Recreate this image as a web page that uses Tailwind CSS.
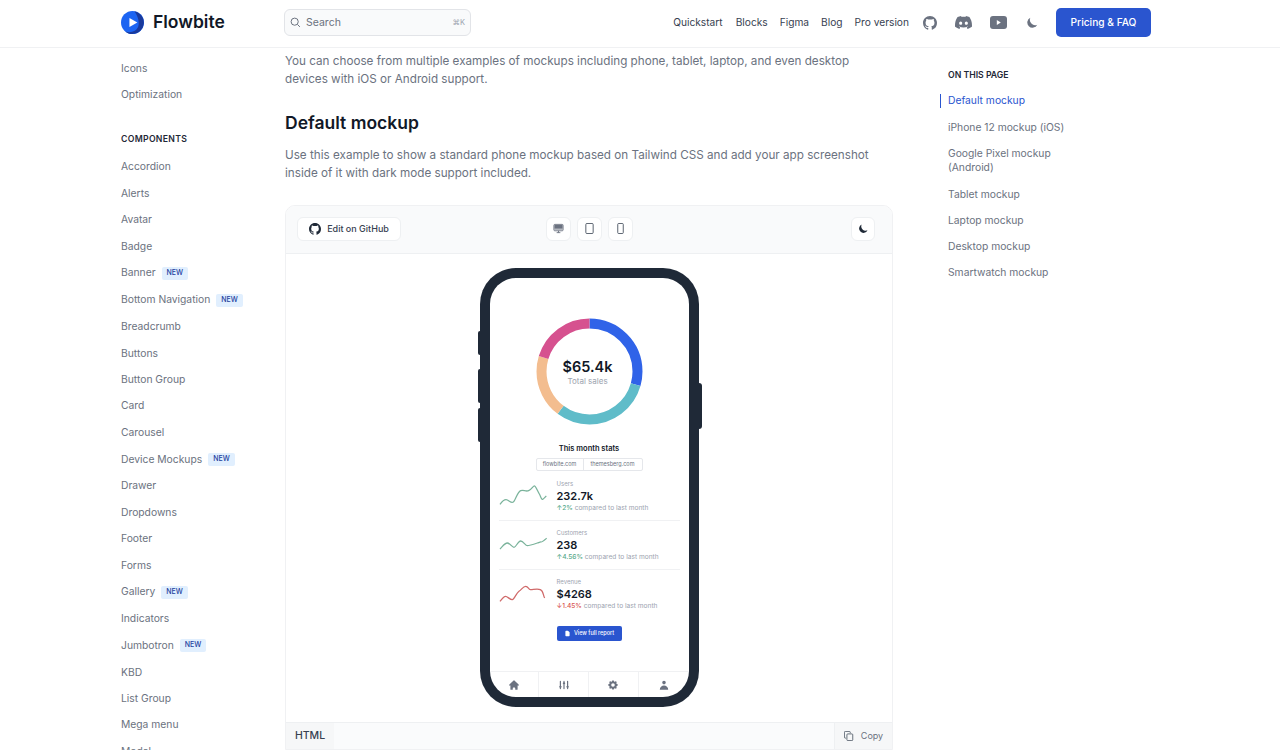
<!DOCTYPE html>
<html lang="en">
<head>
    <meta charset="UTF-8">
    <title>Flowbite | Device Mockups</title>
    <script src="https://cdn.jsdelivr.net/npm/@tailwindcss/browser@4"></script>
</head>
<body class="bg-white font-['Inter',sans-serif] h-[750px] overflow-hidden">

    <!-- Header -->
    <header class="h-[48px] border-b border-[#f0f1f3] flex items-center pb-[2px] pl-[121px] pr-[129px]">
        <a class="flex items-center w-[163px]">
            <svg class="w-[23px] h-[23px]" viewBox="0 0 24 24">
                <circle cx="12" cy="12" r="12" fill="#1c64f2"/>
                <path d="M14 .2A12 12 0 0 1 12 24c-3 0-5.500-1-7.500-2.700 5 2 11.500 .5 13.500-5 1.500-5-.5-11.500-4-16.100z" fill="#1a3a9c"/>
                <path d="M8.800 7.300 17 12l-8.200 4.700z" fill="#fff"/>
            </svg>
            <span class="ml-[9px] text-[17.500px] font-semibold text-[#111827]">Flowbite</span>
        </a>
        <div class="w-[187px] h-[27px] rounded-[6px] border border-[#e2e4e8] bg-[#f9fafb] flex items-center px-[5px] text-[#6b7280]">
            <svg class="w-[11px] h-[11px]" viewBox="0 0 20 20" fill="none" stroke="#6b7280" stroke-width="1.800"><circle cx="8.500" cy="8.500" r="6.500"/><path d="M13.500 13.500 18 18"/></svg>
            <span class="ml-[5px] text-[10.500px]">Search</span>
            <span class="ml-auto text-[7.500px] text-[#9ca3af]">⌘K</span>
        </div>
        <nav class="ml-auto flex items-center text-[10.200px] text-[#374151]">
            <a class="mr-[13px]">Quickstart</a>
            <a class="mr-[12px]">Blocks</a>
            <a class="mr-[12px]">Figma</a>
            <a class="mr-[12px]">Blog</a>
            <a class="mr-[14px]">Pro version</a>
            <svg class="w-[14px] h-[14px] mr-[18px]" viewBox="0 0 16 16" fill="#6b7280"><path d="M8 0C3.580 0 0 3.580 0 8c0 3.540 2.290 6.530 5.470 7.590.4.070.55-.17.55-.38 0-.19-.01-.82-.01-1.490-2.010.37-2.530-.49-2.690-.94-.09-.23-.48-.94-.82-1.130-.28-.15-.68-.52-.01-.53.63-.01 1.080.58 1.230.82.72 1.210 1.870.87 2.330.66.070-.52.28-.87.51-1.070-1.780-.2-3.640-.89-3.640-3.950 0-.87.31-1.590.82-2.150-.08-.2-.36-1.020.08-2.120 0 0 .67-.21 2.200.82.64-.18 1.320-.27 2-.27.68 0 1.360.09 2 .27 1.530-1.040 2.200-.82 2.200-.82.44 1.100.16 1.920.08 2.120.51.56.82 1.270.82 2.150 0 3.070-1.870 3.750-3.650 3.950.29.25.54.73.54 1.480 0 1.070-.01 1.930-.01 2.200 0 .21.15.46.55.38A8.013 8.013 0 0 0 16 8c0-4.420-3.580-8-8-8z"/></svg>
            <svg class="w-[17px] h-[17px] mr-[18px]" viewBox="0 0 24 24" fill="#6b7280"><path d="M20.317 4.370a19.790 19.790 0 0 0-4.885-1.515.074.074 0 0 0-.079.037c-.211.375-.445.865-.608 1.250-1.845-.276-3.680-.276-5.487 0-.164-.393-.406-.874-.618-1.250a.077.077 0 0 0-.079-.037 19.740 19.740 0 0 0-4.885 1.515.070.070 0 0 0-.032.028C.533 9.046-.319 13.580.099 18.058a.082.082 0 0 0 .031.056c2.053 1.508 4.041 2.423 5.993 3.029a.078.078 0 0 0 .084-.028c.462-.630.873-1.295 1.226-1.994a.076.076 0 0 0-.042-.106c-.653-.248-1.274-.549-1.872-.892a.077.077 0 0 1-.008-.128c.126-.094.252-.192.372-.291a.074.074 0 0 1 .078-.011c3.928 1.793 8.180 1.793 12.061 0a.074.074 0 0 1 .079.010c.120.099.246.198.373.292a.077.077 0 0 1-.007.128c-.598.349-1.219.645-1.873.891a.077.077 0 0 0-.041.107c.360.698.772 1.363 1.225 1.993a.076.076 0 0 0 .084.029c1.961-.607 3.950-1.522 6.002-3.029a.077.077 0 0 0 .031-.055c.500-5.177-.838-9.674-3.548-13.660a.061.061 0 0 0-.031-.029zM8.020 15.331c-1.183 0-2.157-1.086-2.157-2.419 0-1.333.956-2.419 2.157-2.419 1.211 0 2.176 1.095 2.157 2.419 0 1.333-.956 2.419-2.157 2.419zm7.975 0c-1.183 0-2.157-1.086-2.157-2.419 0-1.333.955-2.419 2.157-2.419 1.211 0 2.176 1.095 2.157 2.419 0 1.333-.946 2.419-2.157 2.419z"/></svg>
            <svg class="w-[17px] h-[13px] mr-[19px]" viewBox="0 0 17 13"><rect width="17" height="13" rx="3" fill="#6b7280"/><path d="M6.800 4v5l4-2.500z" fill="#fff"/></svg>
            <svg class="w-[13px] h-[13px] mr-[17px]" viewBox="0 0 20 20" fill="#6b7280"><path d="M17.293 13.293A8 8 0 0 1 6.707 2.707a8.001 8.001 0 1 0 10.586 10.586z"/></svg>
            <a class="w-[95px] h-[29px] rounded-[5px] bg-[#2a55cf] text-white font-medium text-[10.200px] flex items-center justify-center">Pricing &amp; FAQ</a>
        </nav>
    </header>

    <div class="flex">
        <!-- Sidebar -->
        <aside class="w-[164px] ml-[121px] pt-[7px] text-[10.300px] text-[#6b7280]">
            <div class="h-[26.450px] flex items-center">Icons</div>
            <div class="h-[26.450px] flex items-center">Optimization</div>
            <div class="mt-[21px] mb-[3px] h-[22px] flex items-center text-[8.700px] font-semibold text-[#1f2937] tracking-[0.3px]">COMPONENTS</div>
            <div class="h-[26.450px] flex items-center">Accordion</div>
            <div class="h-[26.450px] flex items-center">Alerts</div>
            <div class="h-[26.450px] flex items-center">Avatar</div>
            <div class="h-[26.450px] flex items-center">Badge</div>
            <div class="h-[27px] flex items-center">Banner<span class="ml-[6px] px-[5px] h-[13px] flex items-center rounded-[2px] bg-[#e1effe] text-[#1e429f] text-[7px] font-medium">NEW</span></div>
            <div class="h-[27px] flex items-center">Bottom Navigation<span class="ml-[6px] px-[5px] h-[13px] flex items-center rounded-[2px] bg-[#e1effe] text-[#1e429f] text-[7px] font-medium">NEW</span></div>
            <div class="h-[26.450px] flex items-center">Breadcrumb</div>
            <div class="h-[26.450px] flex items-center">Buttons</div>
            <div class="h-[26.450px] flex items-center">Button Group</div>
            <div class="h-[26.450px] flex items-center">Card</div>
            <div class="h-[26.450px] flex items-center">Carousel</div>
            <div class="h-[27px] flex items-center">Device Mockups<span class="ml-[6px] px-[5px] h-[13px] flex items-center rounded-[2px] bg-[#e1effe] text-[#1e429f] text-[7px] font-medium">NEW</span></div>
            <div class="h-[26.450px] flex items-center">Drawer</div>
            <div class="h-[26.450px] flex items-center">Dropdowns</div>
            <div class="h-[26.450px] flex items-center">Footer</div>
            <div class="h-[26.450px] flex items-center">Forms</div>
            <div class="h-[27px] flex items-center">Gallery<span class="ml-[6px] px-[5px] h-[13px] flex items-center rounded-[2px] bg-[#e1effe] text-[#1e429f] text-[7px] font-medium">NEW</span></div>
            <div class="h-[26.450px] flex items-center">Indicators</div>
            <div class="h-[27px] flex items-center">Jumbotron<span class="ml-[6px] px-[5px] h-[13px] flex items-center rounded-[2px] bg-[#e1effe] text-[#1e429f] text-[7px] font-medium">NEW</span></div>
            <div class="h-[26.450px] flex items-center">KBD</div>
            <div class="h-[26.450px] flex items-center">List Group</div>
            <div class="h-[26.450px] flex items-center">Mega menu</div>
            <div class="h-[26.450px] flex items-center">Modal</div>
        </aside>

        <!-- Main Content -->
        <main class="w-[608px] pt-[5px]">
            <p class="text-[11.700px] leading-[17.500px] text-[#6b7280]">You can choose from multiple examples of mockups including phone, tablet, laptop, and even desktop devices with iOS or Android support.</p>
            <h2 class="mt-[23px] text-[17.500px] leading-[24px] font-semibold text-[#111827]">Default mockup</h2>
            <p class="mt-[12px] text-[11.700px] leading-[17.500px] text-[#6b7280]">Use this example to show a standard phone mockup based on Tailwind CSS and add your app screenshot inside of it with dark mode support included.</p>

            <div class="mt-[23px] border border-[#f0f1f3] rounded-t-[10px] overflow-hidden">
                <!-- Preview toolbar -->
                <div class="h-[48px] bg-[#f9fafb] border-b border-[#eef0f2] relative flex items-center pb-[2px] pl-[11px] pr-[17px]">
                    <a class="w-[104px] h-[24px] bg-white border border-[#eef0f2] rounded-[6px] flex items-center justify-center text-[9px] font-medium text-[#374151]">
                        <svg class="w-[12px] h-[12px] mr-[6px]" viewBox="0 0 16 16" fill="#1f2937"><path d="M8 0C3.580 0 0 3.580 0 8c0 3.540 2.290 6.530 5.470 7.590.4.070.55-.17.55-.38 0-.19-.01-.82-.01-1.490-2.010.37-2.530-.49-2.690-.94-.09-.23-.48-.94-.82-1.130-.28-.15-.68-.52-.01-.53.63-.01 1.080.58 1.230.82.72 1.210 1.870.87 2.330.66.070-.52.28-.87.51-1.070-1.780-.2-3.640-.89-3.640-3.950 0-.87.31-1.590.82-2.150-.08-.2-.36-1.020.08-2.120 0 0 .67-.21 2.200.82.64-.18 1.320-.27 2-.27.68 0 1.360.09 2 .27 1.530-1.040 2.200-.82 2.200-.82.44 1.100.16 1.920.08 2.120.51.56.82 1.270.82 2.150 0 3.070-1.870 3.750-3.650 3.950.29.25.54.73.54 1.480 0 1.070-.01 1.930-.01 2.200 0 .21.15.46.55.38A8.013 8.013 0 0 0 16 8c0-4.420-3.580-8-8-8z"/></svg>
                        Edit on GitHub
                    </a>
                    <div class="ml-[145px] flex gap-[6px]">
                        <span class="w-[25px] h-[24px] bg-white border border-[#eef0f2] rounded-[6px] flex items-center justify-center">
                            <svg class="w-[11px] h-[11px]" viewBox="0 0 12 12" fill="none" stroke="#6b7280"><rect x="1" y="1.500" width="10" height="7" rx="1"/><path d="M1.500 6.500h9M1.500 4h9M1.500 5.200h9M1.500 2.700h9" stroke-width="1.200"/><path d="M4 10.500h4M6 8.500v2"/></svg>
                        </span>
                        <span class="w-[25px] h-[24px] bg-white border border-[#eef0f2] rounded-[6px] flex items-center justify-center">
                            <svg class="w-[11px] h-[11px]" viewBox="0 0 12 12" fill="none" stroke="#4b5563"><rect x="2" y=".5" width="8" height="11" rx="1.200"/></svg>
                        </span>
                        <span class="w-[25px] h-[24px] bg-white border border-[#eef0f2] rounded-[6px] flex items-center justify-center">
                            <svg class="w-[11px] h-[11px]" viewBox="0 0 12 12" fill="none" stroke="#4b5563"><rect x="3" y=".5" width="6" height="11" rx="1"/></svg>
                        </span>
                    </div>
                    <span class="ml-auto w-[24px] h-[24px] bg-white border border-[#eef0f2] rounded-[6px] flex items-center justify-center">
                        <svg class="w-[11px] h-[11px]" viewBox="0 0 20 20" fill="#1f2937"><path d="M17.293 13.293A8 8 0 0 1 6.707 2.707a8.001 8.001 0 1 0 10.586 10.586z"/></svg>
                    </span>
                </div>

                <!-- Phone preview -->
                <div class="h-[468px] flex justify-center pt-[14px]">
                    <div class="relative w-[219px] h-[439px] bg-[#1f2937] rounded-[36px] p-[10px]">
                        <span class="absolute left-[-2px] top-[63px] w-[2px] h-[24px] bg-[#1f2937] rounded-l"></span>
                        <span class="absolute left-[-2px] top-[101px] w-[2px] h-[34px] bg-[#1f2937] rounded-l"></span>
                        <span class="absolute left-[-2px] top-[140px] w-[2px] h-[34px] bg-[#1f2937] rounded-l"></span>
                        <span class="absolute right-[-3px] top-[115px] w-[3px] h-[46px] bg-[#1f2937] rounded-r"></span>
                        <div class="w-[199px] h-[419px] bg-white rounded-[26px] overflow-hidden flex flex-col">
                            <!-- Donut -->
                            <div class="relative mt-[40px] mx-auto w-[107px] h-[107px]">
                                <svg class="w-[107px] h-[107px] -rotate-90" viewBox="0 0 107 107" fill="none" stroke-width="10">
                                    <circle cx="53.500" cy="53.500" r="48" pathLength="360" stroke="#3063e8" stroke-dasharray="106 254"/>
                                    <circle cx="53.500" cy="53.500" r="48" pathLength="360" stroke="#5fbcc9" stroke-dasharray="111 249" stroke-dashoffset="-106"/>
                                    <circle cx="53.500" cy="53.500" r="48" pathLength="360" stroke="#f3bd8f" stroke-dasharray="70 290" stroke-dashoffset="-217"/>
                                    <circle cx="53.500" cy="53.500" r="48" pathLength="360" stroke="#d6518f" stroke-dasharray="73 287" stroke-dashoffset="-287"/>
                                </svg>
                                <div class="absolute inset-0 flex flex-col items-center justify-center pr-[3px]">
                                    <span class="text-[14.500px] leading-[18px] font-semibold text-[#111827]">$65.4k</span>
                                    <span class="text-[8px] leading-[10px] text-[#9ca3af]">Total sales</span>
                                </div>
                            </div>
                            <h3 class="mt-[19px] text-center text-[7.500px] leading-[10px] font-semibold text-[#111827]">This month stats</h3>
                            <div class="mt-[4px] mx-auto flex h-[13px] border border-[#e5e7eb] rounded-[2px] text-[5.500px] text-[#6b7280]">
                                <span class="w-[47px] flex items-center justify-center border-r border-[#e5e7eb]">flowbite.com</span>
                                <span class="w-[58px] flex items-center justify-center">themesberg.com</span>
                            </div>
                            <!-- Stats -->
                            <div class="mt-[9px] mx-[9px] h-[41px] border-b border-[#f0f1f3] flex">
                                <svg class="mt-[3px] w-[50px] h-[24px]" viewBox="25 40 150 70" fill="none" stroke="#7ab39b" stroke-width="3.800" stroke-linejoin="round"><path d="M28 103C36 92 42 86 50 90S62 100 68 96 80 66 90 62s14 4 24 0 14-16 18-14 10 18 14 24 6 18 10 16 8-8 11-10"/></svg>
                                <div class="ml-[8px] flex flex-col">
                                    <span class="text-[6px] leading-[8px] text-[#9ca3af]">Users</span>
                                    <span class="text-[11px] leading-[16px] font-semibold text-[#111827]">232.7k</span>
                                    <span class="text-[6.600px] leading-[9px] text-[#9ca3af]"><b class="font-medium text-[#57a98a]">↑2%</b> compared to last month</span>
                                </div>
                            </div>
                            <div class="mx-[9px] pt-[8px] h-[49px] border-b border-[#f0f1f3] flex">
                                <svg class="mt-[3px] w-[50px] h-[24px]" viewBox="25 200 150 70" fill="none" stroke="#7ab39b" stroke-width="3.800" stroke-linejoin="round"><path d="M28 250c8-8 14-18 22-18s14 13 20 13 12-19 20-19 14 14 20 14 24-6 30-8 10-4 12-3 12-8 16-11"/></svg>
                                <div class="ml-[8px] flex flex-col">
                                    <span class="text-[6px] leading-[8px] text-[#9ca3af]">Customers</span>
                                    <span class="text-[11px] leading-[16px] font-semibold text-[#111827]">238</span>
                                    <span class="text-[6.600px] leading-[9px] text-[#9ca3af]"><b class="font-medium text-[#57a98a]">↑4.56%</b> compared to last month</span>
                                </div>
                            </div>
                            <div class="mx-[9px] pt-[8px] flex">
                                <svg class="mt-[3px] w-[50px] h-[24px]" viewBox="85 40 150 70" fill="none" stroke="#d06a6a" stroke-width="3.800" stroke-linejoin="round"><path d="M88 100c6-8 12-15 17-15s14 11 20 10 12-20 20-25 12-15 20-15 8 9 14 10 20-4 30 0 8 18 13 25"/></svg>
                                <div class="ml-[8px] flex flex-col">
                                    <span class="text-[6px] leading-[8px] text-[#9ca3af]">Revenue</span>
                                    <span class="text-[11px] leading-[16px] font-semibold text-[#111827]">$4268</span>
                                    <span class="text-[6.600px] leading-[9px] text-[#9ca3af]"><b class="font-medium text-[#d9534f]">↓1.45%</b> compared to last month</span>
                                </div>
                            </div>
                            <a class="mt-[15px] ml-[67px] w-[65px] h-[15px] rounded-[2px] bg-[#2a55cf] text-white text-[5.500px] font-medium flex items-center justify-center">
                                <svg class="w-[7px] h-[7px] mr-[3px]" viewBox="0 0 20 20" fill="#fff"><path d="M4 4a2 2 0 0 1 2-2h4.586A2 2 0 0 1 12 2.586L15.414 6A2 2 0 0 1 16 7.414V16a2 2 0 0 1-2 2H6a2 2 0 0 1-2-2V4z"/></svg>
                                View full report
                            </a>
                            <!-- Bottom nav -->
                            <div class="mt-auto h-[26px] border-t border-[#f0f1f3] grid grid-cols-4">
                                <span class="flex items-center justify-center border-r border-[#f0f1f3]"><svg class="w-[12px] h-[12px]" viewBox="0 0 20 20" fill="#6b7280"><path d="M10.707 2.293a1 1 0 0 0-1.414 0l-7 7a1 1 0 0 0 1.414 1.414L4 10.414V17a1 1 0 0 0 1 1h2a1 1 0 0 0 1-1v-2a1 1 0 0 1 1-1h2a1 1 0 0 1 1 1v2a1 1 0 0 0 1 1h2a1 1 0 0 0 1-1v-6.586l.293.293a1 1 0 0 0 1.414-1.414l-7-7z"/></svg></span>
                                <span class="flex items-center justify-center border-r border-[#f0f1f3]"><svg class="w-[12px] h-[12px]" viewBox="0 0 20 20" fill="#6b7280"><path d="M5 4a1 1 0 0 0-2 0v7.268a2 2 0 0 0 0 3.464V16a1 1 0 1 0 2 0v-1.268a2 2 0 0 0 0-3.464V4zM11 4a1 1 0 1 0-2 0v1.268a2 2 0 0 0 0 3.464V16a1 1 0 1 0 2 0V8.732a2 2 0 0 0 0-3.464V4zM16 3a1 1 0 0 1 1 1v7.268a2 2 0 0 1 0 3.464V16a1 1 0 1 1-2 0v-1.268a2 2 0 0 1 0-3.464V4a1 1 0 0 1 1-1z"/></svg></span>
                                <span class="flex items-center justify-center border-r border-[#f0f1f3]"><svg class="w-[12px] h-[12px]" viewBox="0 0 20 20" fill="#6b7280"><path fill-rule="evenodd" d="M11.490 3.170c-.38-1.560-2.600-1.560-2.980 0a1.532 1.532 0 0 1-2.286.948c-1.372-.836-2.942.734-2.106 2.106.54.886.061 2.042-.947 2.287-1.561.379-1.561 2.600 0 2.978a1.532 1.532 0 0 1 .947 2.287c-.836 1.372.734 2.942 2.106 2.106a1.532 1.532 0 0 1 2.287.947c.379 1.561 2.600 1.561 2.978 0a1.533 1.533 0 0 1 2.287-.947c1.372.836 2.942-.734 2.106-2.106a1.533 1.533 0 0 1 .947-2.287c1.561-.379 1.561-2.600 0-2.978a1.532 1.532 0 0 1-.947-2.287c.836-1.372-.734-2.942-2.106-2.106a1.532 1.532 0 0 1-2.287-.947zM10 13a3 3 0 1 0 0-6 3 3 0 0 0 0 6z"/></svg></span>
                                <span class="flex items-center justify-center"><svg class="w-[12px] h-[12px]" viewBox="0 0 20 20" fill="#6b7280"><path d="M10 9a3 3 0 1 0 0-6 3 3 0 0 0 0 6zm-7 9a7 7 0 1 1 14 0H3z"/></svg></span>
                            </div>
                        </div>
                    </div>
                </div>

                <!-- Code bar -->
                <div class="h-[27px] bg-[#fafbfc] border-t border-[#eef0f2] flex items-stretch">
                    <span class="w-[48px] bg-[#f6f7f8] flex items-center justify-center text-[10.500px] font-medium text-[#374151]">HTML</span>
                    <span class="ml-auto w-[58px] bg-[#f6f7f8] border-l border-[#eef0f2] flex items-center justify-center text-[9px] text-[#6b7280]">
                        <svg class="w-[10px] h-[10px] mr-[7px]" viewBox="0 0 12 12" fill="none" stroke="#4b5563"><rect x="3.500" y="3.500" width="7" height="8" rx="1"/><path d="M2.500 8.500h-1a1 1 0 0 1-1-1v-6a1 1 0 0 1 1-1h5a1 1 0 0 1 1 1v1"/></svg>
                        Copy
                    </span>
                </div>
            </div>
        </main>

        <!-- Right nav -->
        <aside class="ml-[47px] w-[200px] pt-[21px] text-[10.300px] text-[#6b7280]">
            <div class="h-[14px] flex items-center text-[8.700px] font-semibold text-[#1f2937] pl-[8px]">ON THIS PAGE</div>
            <div class="mt-[11px] border-l border-[#2a55cf] pl-[7px] h-[14px] flex items-center text-[#2a55cf]">Default mockup</div>
            <div class="mt-[12px] pl-[8px] leading-[14px]">iPhone 12 mockup (iOS)</div>
            <div class="mt-[12.300px] pl-[8px] leading-[14px]">Google Pixel mockup<br>(Android)</div>
            <div class="mt-[12.300px] pl-[8px] leading-[14px]">Tablet mockup</div>
            <div class="mt-[12.300px] pl-[8px] leading-[14px]">Laptop mockup</div>
            <div class="mt-[12.300px] pl-[8px] leading-[14px]">Desktop mockup</div>
            <div class="mt-[12.300px] pl-[8px] leading-[14px]">Smartwatch mockup</div>
        </aside>
    </div>
</body>
</html>
